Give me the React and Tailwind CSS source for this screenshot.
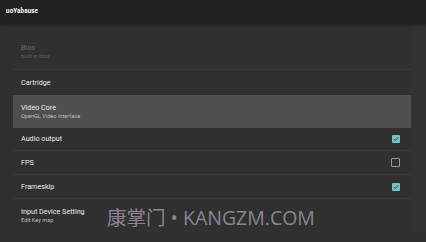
import React from 'react';

const Check = ({ on }) =>
  on ? (
    <div className="w-[8px] h-[8px] rounded-[1px] bg-[#6cc6bb] flex items-center justify-center">
      <svg width="6" height="6" viewBox="0 0 24 24" fill="none" stroke="#2c3a38" strokeWidth="4">
        <path d="M4 13l5 5L20 6" />
      </svg>
    </div>
  ) : (
    <div className="w-[9px] h-[9px] rounded-[1px] border-[1.5px] border-[#9a9a9a]" />
  );

const Row = ({ title, sub, h, check, active, disabled, divider = true }) => (
  <div
    className={`flex items-center justify-between pl-2 pr-[11px] ${
      active ? 'bg-[#4f4f4f]' : divider ? 'border-b border-[#3b3b3b]' : ''
    }`}
    style={{ height: h }}
  >
    <div className="flex flex-col leading-none">
      <span className={`text-[7.2px] ${disabled ? 'text-[#6a6a6a]' : 'text-[#ececec]'}`}>{title}</span>
      {sub && (
        <span className={`text-[5.6px] mt-[3px] ${disabled ? 'text-[#606060]' : 'text-[#bdbdbd]'}`}>{sub}</span>
      )}
    </div>
    {check !== undefined && <Check on={check} />}
  </div>
);

export default function App() {
  return (
    <div className="w-[426px] h-[242px] overflow-hidden bg-[#303030] relative" style={{ fontFamily: 'Roboto, "Liberation Sans", sans-serif' }}>
      <div className="h-[24px] bg-[#212121] flex items-center pl-[6px] shadow-[0_1px_3px_rgba(0,0,0,0.4)] relative z-10">
        <span className="text-[6.3px] font-bold text-white tracking-[0.1px]">uoYabause</span>
      </div>
      <div className="flex">
        <div className="w-[398px] ml-[13px] pt-[11px]">
          <Row title="Bios" sub="built in bios" h={35} disabled />
          <Row title="Cartridge" h={25} divider={false} />
          <Row title="Video Core" sub="OpenGL Video Interface" h={33} active />
          <Row title="Audio output" h={23} check={true} />
          <Row title="FPS" h={24} check={false} />
          <Row title="Frameskip" h={24} check={true} />
          <Row title="Input Device Setting" sub="Edit Key map" h={34} divider={false} />
        </div>
        <div className="flex-1 bg-[#323232]" />
      </div>
      <div
        className="absolute left-[107px] top-[208px] text-[19.5px] text-[#8c8490] whitespace-nowrap leading-none"
        style={{ fontFamily: '"Open Sans", "Noto Sans CJK SC", sans-serif' }}
      >
        康掌门 • KANGZM.COM
      </div>
    </div>
  );
}
